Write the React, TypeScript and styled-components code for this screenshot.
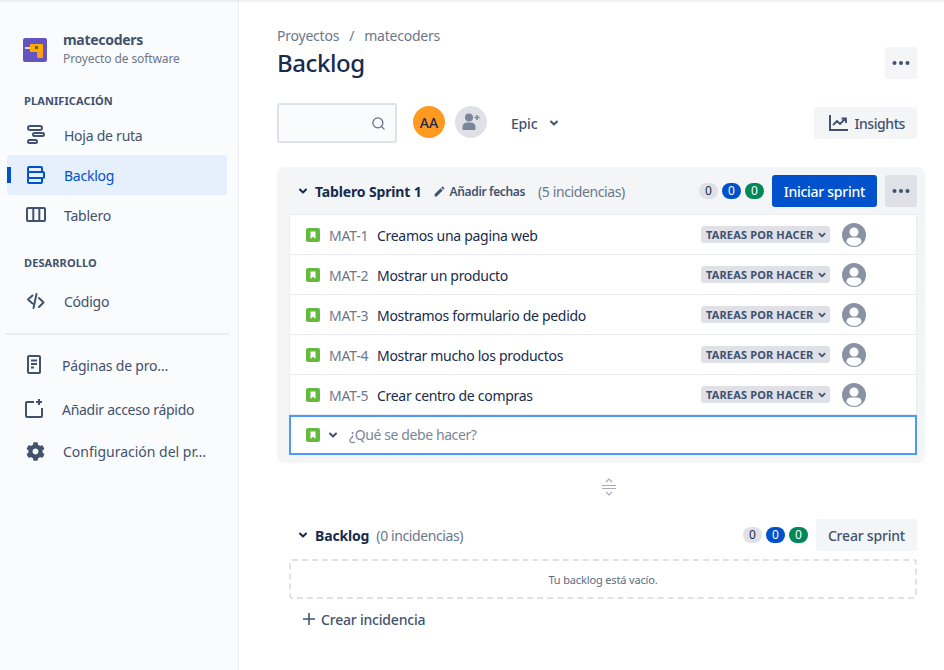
import * as React from 'react';
import styled, { createGlobalStyle } from 'styled-components';
import { Search } from 'lucide-react';
import { FaCog } from 'react-icons/fa';
import { MdEdit } from 'react-icons/md';

const GlobalStyle = createGlobalStyle`
html, body {
    margin: 0;
    padding: 0;
    background: #fff;
}
body {
    font-family: "Noto Sans", "Open Sans", sans-serif;
    font-size: 14px;
    color: #172B4D;
}
* { box-sizing: border-box; }
`

const Page = styled.div`
width: 944px;
height: 670px;
display: flex;
overflow: hidden;
position: relative;
`

const TopShade = styled.div`
position: absolute;
top: 0;
left: 0;
right: 0;
height: 3px;
background: linear-gradient(rgba(9, 30, 66, 0.09), rgba(9, 30, 66, 0));
pointer-events: none;
`

const Sidebar = styled.aside`
width: 239px;
flex: none;
height: 100%;
background: #FAFBFC;
border-right: 1px solid #EBECF0;
padding: 31px 11px 0 7px;
`

const ProjectHeader = styled.div`
display: flex;
align-items: center;
padding-left: 16px;
gap: 16px;
`

const ProjectLogo = styled.svg`
width: 24px;
height: 24px;
flex: none;
`

const ProjectName = styled.div`
font-size: 14px;
font-weight: 700;
line-height: 18px;
color: #42526E;
letter-spacing: -0.3px;
`

const ProjectType = styled.div`
font-size: 12px;
line-height: 18px;
padding-top: 1px;
color: #6B778C;
letter-spacing: -0.1px;
`

const SectionTitle = styled.div<{ $top: number; $bottom: number }>`
margin-top: ${(p) => p.$top}px;
margin-bottom: ${(p) => p.$bottom}px;
padding-left: 17px;
font-size: 11px;
font-weight: 700;
line-height: 16px;
color: #42526E;
letter-spacing: 0.1px;
`

const NavItem = styled.div<{ $active?: boolean }>`
height: 40px;
display: flex;
align-items: center;
padding-left: 17px;
gap: 17px;
position: relative;
border-radius: 3px;
font-size: 14px;
letter-spacing: -0.25px;
color: ${(p) => (p.$active ? '#0052CC' : '#42526E')};
background: ${(p) => (p.$active ? '#E6EFFC' : 'transparent')};

${(p) => p.$active && `
    &::before {
        content: "";
        position: absolute;
        left: 0;
        top: 12px;
        width: 4px;
        height: 16px;
        background: #0052CC;
    }
`}
`

const NavIcon = styled.svg`
width: 24px;
height: 24px;
flex: none;
margin-left: -1px;
`

const Divider = styled.div`
height: 2px;
margin: 12px 0 10px -2px;
width: 224px;
background: #EBECF0;
`

const ShortcutItem = styled.div<{ $top?: number; $gap?: number; $spacing?: number }>`
height: 40px;
margin-top: ${(p) => p.$top ?? 0}px;
display: flex;
align-items: center;
padding-left: 17px;
gap: ${(p) => p.$gap ?? 15}px;
font-size: 14px;
letter-spacing: ${(p) => p.$spacing ?? -0.2}px;
color: #42526E;
white-space: nowrap;
`

const GearSlot = styled.div`
width: 24px;
height: 24px;
flex: none;
margin-left: -1px;
display: flex;
align-items: center;
justify-content: center;
font-size: 19px;
`

const Main = styled.main`
flex: 1;
padding: 26px 19px 0 38px;
min-width: 0;
`

const Breadcrumbs = styled.div`
display: flex;
gap: 10px;
font-size: 14px;
line-height: 20px;
letter-spacing: -0.22px;
color: #6B778C;
`

const TitleRow = styled.div`
display: flex;
align-items: center;
justify-content: space-between;
padding-right: 8px;
margin-top: 1px;
`

const Title = styled.h1`
margin: 0;
font-size: 24px;
font-weight: 500;
line-height: 32px;
letter-spacing: -0.4px;
color: #172B4D;
`

const IconButton = styled.button<{ $dark?: boolean }>`
width: 32px;
height: 32px;
border: 0;
padding: 0;
border-radius: 3px;
display: flex;
align-items: center;
justify-content: center;
background: ${(p) => (p.$dark ? '#DFE1E6' : '#F4F5F7')};
`

const Toolbar = styled.div`
margin-top: 24px;
height: 40px;
display: flex;
align-items: center;
padding-right: 8px;
`

const SearchBox = styled.div`
width: 120px;
height: 40px;
border: 2px solid #DFE1E6;
border-radius: 3px;
background: #FAFBFC;
display: flex;
align-items: center;
justify-content: flex-end;
padding-right: 9px;
color: #5E6C84;
margin-right: 16px;
`

const UserAvatar = styled.div`
width: 32px;
height: 32px;
border-radius: 50%;
background: #FF991F;
color: #172B4D;
display: flex;
align-items: center;
justify-content: center;
font-size: 14px;
font-weight: 500;
margin: -2px 10px 0 0;
`

const AddUser = styled.div`
width: 32px;
height: 32px;
border-radius: 50%;
background: #DFE1E6;
display: flex;
align-items: center;
justify-content: center;
margin: -2px 24px 0 0;
`

const EpicFilter = styled.div`
display: flex;
align-items: center;
gap: 9px;
font-size: 14px;
font-weight: 500;
letter-spacing: -0.2px;
color: #42526E;
`

const TextButton = styled.button<{ $primary?: boolean; $spacing?: number }>`
height: 32px;
border: 0;
border-radius: 3px;
padding: 0 12px;
display: flex;
align-items: center;
gap: 4px;
font-family: inherit;
font-size: 14px;
font-weight: 500;
letter-spacing: ${(p) => p.$spacing ?? -0.28}px;
color: ${(p) => (p.$primary ? '#fff' : '#42526E')};
background: ${(p) => (p.$primary ? '#0052CC' : '#F4F5F7')};
white-space: nowrap;
`

const InsightsButton = styled(TextButton)`
margin-left: auto;
`

const SprintPanel = styled.section`
margin-top: 24px;
padding: 8px 8px 8px 12px;
background: #F4F5F7;
border-radius: 8px;
`

const SectionHeader = styled.div`
height: 32px;
display: flex;
align-items: center;
padding-left: 6px;
`

const BacklogSection = styled.section`
margin-top: 23px;
padding: 0 8px 0 12px;
`

const HeaderTitle = styled.div`
margin-left: 4px;
font-size: 14px;
font-weight: 700;
letter-spacing: -0.15px;
color: #172B4D;
`

const DatesLink = styled.div`
margin-left: 11px;
display: flex;
align-items: center;
gap: 4px;
font-size: 12px;
font-weight: 600;
letter-spacing: -0.35px;
color: #42526E;
`

const IssueCount = styled.div<{ $left: number }>`
margin-left: ${(p) => p.$left}px;
font-size: 14px;
letter-spacing: -0.4px;
color: #6B778C;
`

const Badges = styled.div<{ $right: number }>`
margin-left: auto;
margin-right: ${(p) => p.$right}px;
display: flex;
gap: 4px;
`

const Badge = styled.span<{ $bg: string; $fg: string }>`
width: 19px;
height: 16px;
border-radius: 8px;
display: flex;
align-items: center;
justify-content: center;
font-size: 12px;
line-height: 16px;
background: ${(p) => p.$bg};
color: ${(p) => p.$fg};
`

const HeaderActions = styled.div`
display: flex;
gap: 8px;
`

const IssueList = styled.div`
margin-top: 7px;
background: #fff;
border: 1px solid #EBECF0;
border-bottom: 0;
`

const IssueRow = styled.div`
height: 40px;
display: flex;
align-items: center;
padding-left: 16px;
border-bottom: 1px solid #EBECF0;
`

const StoryIcon = styled.svg`
width: 14px;
height: 14px;
flex: none;
`

const IssueKey = styled.span`
width: 48px;
margin-left: 9px;
padding-top: 2px;
flex: none;
font-size: 14px;
letter-spacing: -0.2px;
color: #6B778C;
`

const IssueSummary = styled.span`
flex: 1;
padding-top: 2px;
font-size: 14px;
letter-spacing: -0.3px;
color: #172B4D;
`

const StatusTag = styled.div`
width: 129px;
height: 17px;
flex: none;
border-radius: 3px;
background: #DFE1E6;
display: flex;
align-items: center;
justify-content: space-between;
padding: 0 1px 0 5px;
font-size: 11px;
font-weight: 700;
letter-spacing: 0.15px;
color: #42526E;
white-space: nowrap;
`

const AssigneeIcon = styled.svg`
width: 24px;
height: 24px;
flex: none;
margin: 0 50px 0 12px;
`

const InlineCreate = styled.div`
height: 40px;
background: #fff;
border: 2px solid #4C9AFF;
display: flex;
align-items: center;
padding-left: 15px;
gap: 5px;
color: #42526E;
`

const CreatePlaceholder = styled.span`
margin-left: 3px;
font-size: 14px;
line-height: 20px;
letter-spacing: -0.4px;
color: #7A869A;
`

const Resizer = styled.div`
margin-top: 15px;
height: 18px;
display: flex;
justify-content: center;
padding-left: 16px;
`

const EmptyBacklog = styled.div`
margin-top: 8px;
height: 40px;
border: 2px dashed #DFE1E6;
border-radius: 3px;
display: flex;
align-items: center;
justify-content: center;
font-size: 11px;
letter-spacing: -0.15px;
color: #5E6C84;
`

const CreateIssue = styled.div`
margin-top: 4px;
height: 32px;
padding-left: 12px;
display: flex;
align-items: center;
gap: 4px;
font-size: 14px;
font-weight: 500;
letter-spacing: -0.2px;
color: #42526E;
`

const Chevron = ({ size = 16 }: { size?: number }) => (
    <svg width={size} height={size} viewBox="0 0 16 16" fill="none">
        <path d="M5 6.500l3 3 3-3" stroke="currentColor" strokeWidth="2" strokeLinecap="round" strokeLinejoin="round" />
    </svg>
)

const Dots = () => (
    <svg width="20" height="6" viewBox="0 0 20 6" fill="#42526E">
        <circle cx="3.500" cy="3" r="2" />
        <circle cx="10" cy="3" r="2" />
        <circle cx="16.500" cy="3" r="2" />
    </svg>
)

const Story = () => (
    <StoryIcon viewBox="0 0 14 14">
        <rect width="14" height="14" rx="2" fill="#63BA3C" />
        <path d="M4.500 3.500h5v7.200L7 8.800l-2.500 1.900z" fill="#fff" />
    </StoryIcon>
)

const Assignee = () => (
    <AssigneeIcon viewBox="0 0 24 24">
        <circle cx="12" cy="12" r="12" fill="#8993A4" />
        <circle cx="12" cy="9" r="4.500" fill="#fff" />
        <path d="M4.500 18.500c0-2.500 2-4 4.500-4h6c2.500 0 4.500 1.500 4.500 4v.8a9.500 9.500 0 0 1-15 0z" fill="#fff" />
    </AssigneeIcon>
)

const issues = [
    { key: 'MAT-1', summary: 'Creamos una pagina web' },
    { key: 'MAT-2', summary: 'Mostrar un producto' },
    { key: 'MAT-3', summary: 'Mostramos formulario de pedido' },
    { key: 'MAT-4', summary: 'Mostrar mucho los productos' },
    { key: 'MAT-5', summary: 'Crear centro de compras' },
]

const IssueCounts = ({ right }: { right: number }) => (
    <Badges $right={right}>
        <Badge $bg="#DFE1E6" $fg="#172B4D">0</Badge>
        <Badge $bg="#0052CC" $fg="#fff">0</Badge>
        <Badge $bg="#00875A" $fg="#fff">0</Badge>
    </Badges>
)

function App() {
    return (
        <Page>
            <GlobalStyle />
            <Sidebar>
                <ProjectHeader>
                    <ProjectLogo viewBox="0 0 24 24">
                        <rect width="24" height="24" rx="2" fill="#6554C0" />
                        <rect x="2" y="9" width="5" height="2" fill="#DFE1E6" />
                        <rect x="7" y="6" width="13" height="8" rx="1" fill="#FFAB00" />
                        <rect x="14" y="13" width="6" height="7" rx="1" fill="#FF991F" />
                        <rect x="12" y="8" width="3" height="3" fill="#7A5A10" />
                    </ProjectLogo>
                    <div>
                        <ProjectName>matecoders</ProjectName>
                        <ProjectType>Proyecto de software</ProjectType>
                    </div>
                </ProjectHeader>

                <SectionTitle $top={25} $bottom={6}>PLANIFICACIÓN</SectionTitle>
                <NavItem>
                    <NavIcon viewBox="0 0 24 24" fill="none" stroke="#42526E" strokeWidth="2">
                        <rect x="5" y="3" width="14" height="4" rx="2" />
                        <rect x="10" y="10" width="11" height="3" rx="1.500" />
                        <rect x="5" y="17" width="9" height="3" rx="1.500" />
                    </NavIcon>
                    Hoja de ruta
                </NavItem>
                <NavItem $active>
                    <NavIcon viewBox="0 0 24 24" fill="none" stroke="#0052CC" strokeWidth="2">
                        <rect x="5" y="4" width="14" height="5" rx="1" />
                        <rect x="5" y="9" width="16" height="6" rx="1" />
                        <rect x="5" y="15" width="14" height="5" rx="1" />
                    </NavIcon>
                    Backlog
                </NavItem>
                <NavItem>
                    <NavIcon viewBox="0 0 24 24" fill="none" stroke="#42526E" strokeWidth="2">
                        <rect x="4" y="5" width="18" height="13" rx="1" />
                        <path d="M10.300 5v13M16.300 5v13" />
                    </NavIcon>
                    Tablero
                </NavItem>

                <SectionTitle $top={20} $bottom={10}>DESARROLLO</SectionTitle>
                <NavItem>
                    <NavIcon viewBox="0 0 24 24" fill="none" stroke="#42526E" strokeWidth="2" strokeLinecap="round" strokeLinejoin="round">
                        <path d="M9.500 6.500L5 10.500l4.500 4M16 9l4.500 4.500L16 18M13.500 5l-3 14" />
                    </NavIcon>
                    Código
                </NavItem>

                <Divider />

                <ShortcutItem>
                    <NavIcon viewBox="0 0 24 24" fill="none" stroke="#42526E" strokeWidth="2">
                        <rect x="5" y="3" width="12" height="17" rx="1" />
                        <path d="M8 7.500h6M8 11h6M8 14.500h3" />
                    </NavIcon>
                    Páginas de pro…
                </ShortcutItem>
                <ShortcutItem $top={4} $spacing={-0.28}>
                    <NavIcon viewBox="0 0 24 24" fill="none" stroke="#42526E" strokeWidth="2">
                        <path d="M11 5H4a1 1 0 0 0-1 1v13a1 1 0 0 0 1 1h14a1 1 0 0 0 1-1v-8" />
                        <path d="M16 2v6M13 5h6" />
                    </NavIcon>
                    Añadir acceso rápido
                </ShortcutItem>
                <ShortcutItem $top={2} $gap={16} $spacing={0}>
                    <GearSlot><FaCog color="#42526E" /></GearSlot>
                    Configuración del pr…
                </ShortcutItem>
            </Sidebar>

            <Main>
                <Breadcrumbs>
                    <span>Proyectos</span>
                    <span>/</span>
                    <span>matecoders</span>
                </Breadcrumbs>
                <TitleRow>
                    <Title>Backlog</Title>
                    <IconButton><Dots /></IconButton>
                </TitleRow>

                <Toolbar>
                    <SearchBox><Search size={15} strokeWidth={2} /></SearchBox>
                    <UserAvatar>AA</UserAvatar>
                    <AddUser>
                        <svg width="24" height="24" viewBox="0 0 24 24" fill="#7A869A">
                            <circle cx="10" cy="7.500" r="4" />
                            <path d="M3.500 17c0-3 2-4.500 4.500-4.500h4c2.500 0 4.500 1.500 4.500 4.500v2a1 1 0 0 1-1 1h-11a1 1 0 0 1-1-1z" />
                            <path d="M18 5v5M15.500 7.500h5" stroke="#7A869A" strokeWidth="1.500" />
                        </svg>
                    </AddUser>
                    <EpicFilter>Epic <Chevron /></EpicFilter>
                    <InsightsButton $spacing={-0.42}>
                        <svg width="24" height="24" viewBox="0 0 24 24" fill="none" stroke="#42526E" strokeWidth="2">
                            <path d="M4 4v15h18" />
                            <path d="M7 14l4-4 3 3 5-5M15.500 7.500H20V12" strokeWidth="1.800" />
                        </svg>
                        Insights
                    </InsightsButton>
                </Toolbar>

                <SprintPanel>
                    <SectionHeader>
                        <Chevron />
                        <HeaderTitle>Tablero Sprint 1</HeaderTitle>
                        <DatesLink><MdEdit size={13} />Añadir fechas</DatesLink>
                        <IssueCount $left={13}>(5 incidencias)</IssueCount>
                        <IssueCounts right={8} />
                        <HeaderActions>
                            <TextButton $primary>Iniciar sprint</TextButton>
                            <IconButton $dark><Dots /></IconButton>
                        </HeaderActions>
                    </SectionHeader>
                    <IssueList>
                        {issues.map((issue) => (
                            <IssueRow key={issue.key}>
                                <Story />
                                <IssueKey>{issue.key}</IssueKey>
                                <IssueSummary>{issue.summary}</IssueSummary>
                                <StatusTag>TAREAS POR HACER <Chevron size={14} /></StatusTag>
                                <Assignee />
                            </IssueRow>
                        ))}
                    </IssueList>
                    <InlineCreate>
                        <Story />
                        <Chevron />
                        <CreatePlaceholder>¿Qué se debe hacer?</CreatePlaceholder>
                    </InlineCreate>
                </SprintPanel>

                <Resizer>
                    <svg width="16" height="18" viewBox="0 0 16 18" fill="none" stroke="#A5ADBA" strokeWidth="1.200">
                        <path d="M5 4l3-3 3 3M5 14l3 3 3-3" />
                        <path d="M1 7.500h14M1 10.500h14" />
                    </svg>
                </Resizer>

                <BacklogSection>
                    <SectionHeader>
                        <Chevron />
                        <HeaderTitle>Backlog</HeaderTitle>
                        <IssueCount $left={7}>(0 incidencias)</IssueCount>
                        <IssueCounts right={8} />
                        <TextButton $spacing={-0.2}>Crear sprint</TextButton>
                    </SectionHeader>
                    <EmptyBacklog>Tu backlog está vacío.</EmptyBacklog>
                    <CreateIssue>
                        <svg width="16" height="16" viewBox="0 0 16 16" stroke="#42526E" strokeWidth="1.600">
                            <path d="M8 2v12M2 8h12" />
                        </svg>
                        Crear incidencia
                    </CreateIssue>
                </BacklogSection>
            </Main>
            <TopShade />
        </Page>
    );
}

export default App
